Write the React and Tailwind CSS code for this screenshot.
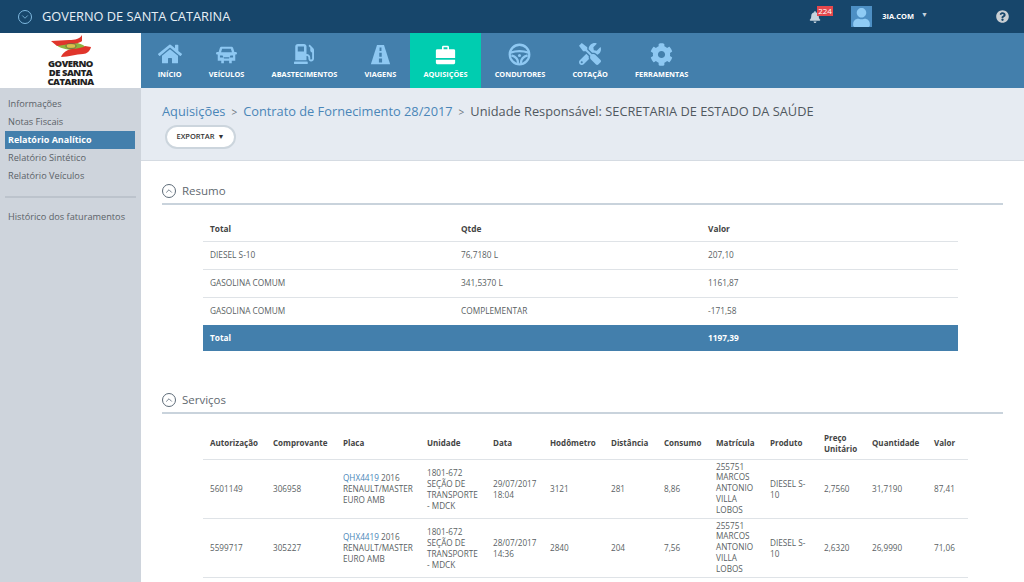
import { FaHome, FaGasPump, FaCog, FaTools, FaBell, FaQuestionCircle, FaUser } from "react-icons/fa";
import { ChevronDown, ChevronUp } from "lucide-react";

const CarIcon = ({ className }) => (
  <svg viewBox="0 0 24 24" className={className} fill="currentColor">
    <path fillRule="evenodd" d="M6.5 3h11c1 0 1.8.6 2.1 1.5L21 9h1.5c.8 0 1.5.7 1.5 1.5S23.300 12 22.500 12H22v7h-4v3h-3v-3H9v3H6v-3H2v-7h-.5C.7 12 0 11.300 0 10.500S.7 9 1.500 9H3l1.400-4.500C4.700 3.600 5.500 3 6.500 3zM7 5.500 5.800 9.500h12.400L17 5.500zM4.500 13v2.500h4L7.500 13zM19.500 13h-3l-1 2.500h4zM9 16.500h6V15H9z" />
  </svg>
);

const RoadIcon = ({ className }) => (
  <svg viewBox="0 0 24 24" className={className} fill="currentColor">
    <path d="M8 1h8l7 22H1z" />
    <path d="M10.900 4h2.200v4h-2.200zM10.600 10h2.800v4.500h-2.800zM10.200 16.500h3.600V21h-3.600z" fill="#437fac" />
  </svg>
);

const BagIcon = ({ className }) => (
  <svg viewBox="0 0 24 24" className={className} fill="currentColor">
    <path fillRule="evenodd" d="M8 6V3.500C8 2.700 8.700 2 9.500 2h5c.8 0 1.500.7 1.500 1.500V6h5.500c.8 0 1.500.7 1.500 1.500V16H1V7.500C1 6.700 1.700 6 2.500 6zM9.800 6h4.400V3.800H9.800z" />
    <path d="M1 18h22v3.500c0 .8-.7 1.500-1.500 1.500h-19C1.700 23 1 22.300 1 21.500z" />
  </svg>
);

const WheelIcon = ({ className }) => (
  <svg viewBox="0 0 24 24" className={className} fill="none" stroke="currentColor">
    <circle cx="12" cy="12" r="10.200" strokeWidth="2.400" />
    <path d="M2.500 10c6-2 13-2 19 0M10.500 21c0-4-1.500-6.500-7-8M13.500 21c0-4 1.500-6.500 7-8" strokeWidth="2.400" />
    <circle cx="12" cy="13" r="1.600" fill="currentColor" strokeWidth="0" />
  </svg>
);

const navItems = [
  { label: "Início", icon: FaHome, size: "w-[24px] h-[24px]" },
  { label: "Veículos", icon: CarIcon, size: "w-[21px] h-[21px]" },
  { label: "Abastecimentos", icon: FaGasPump, size: "w-[20px] h-[20px]" },
  { label: "Viagens", icon: RoadIcon, size: "w-[21px] h-[21px]" },
  { label: "Aquisições", icon: BagIcon, size: "w-[21px] h-[21px]", active: true },
  { label: "Condutores", icon: WheelIcon, size: "w-[23px] h-[23px]" },
  { label: "Cotação", icon: FaTools, size: "w-[22px] h-[22px]" },
  { label: "Ferramentas", icon: FaCog, size: "w-[23px] h-[23px]" },
];

const sideLinks = ["Informações", "Notas Fiscais", "Relatório Analítico", "Relatório Sintético", "Relatório Veículos"];

const resumoRows = [
  ["DIESEL S-10", "76,7180 L", "207,10", "h-[28px] border-b border-[#dfe3e7]"],
  ["GASOLINA COMUM", "341,5370 L", "1161,87", "h-[28px] border-b border-[#dfe3e7]"],
  ["GASOLINA COMUM", "COMPLEMENTAR", "-171,58", "h-[28px]"],
];

const servicoCols = [
  ["Autorização", "w-[63px]"],
  ["Comprovante", "w-[70px]"],
  ["Placa", "w-[84px]"],
  ["Unidade", "w-[66px]"],
  ["Data", "w-[57px]"],
  ["Hodômetro", "w-[61px]"],
  ["Distância", "w-[53px]"],
  ["Consumo", "w-[52px]"],
  ["Matrícula", "w-[54px]"],
  ["Produto", "w-[54px]"],
  ["Preço Unitário", "w-[48px]"],
  ["Quantidade", "w-[62px]"],
  ["Valor", "w-[41px]"],
];

const servicos = [
  { aut: "5601149", comp: "306958", data: ["29/07/2017", "18:04"], hod: "3121", dist: "281", cons: "8,86", preco: "2,7560", qtd: "31,7190", valor: "87,41" },
  { aut: "5599717", comp: "305227", data: ["28/07/2017", "14:36"], hod: "2840", dist: "204", cons: "7,56", preco: "2,6320", qtd: "26,9990", valor: "71,06" },
];

const SectionTitle = ({ title }) => (
  <div className="flex items-center gap-[6px] h-[27px] border-b-2 border-[#c9d3dc] ml-[21px] mr-[21px]">
    <span className="w-[14px] h-[14px] rounded-full border border-[#5d6b78] flex items-center justify-center">
      <ChevronUp className="w-[10px] h-[10px] text-[#5d6b78]" />
    </span>
    <span className="text-[11.5px] text-[#5f6970]">{title}</span>
  </div>
);

export default function App() {
  return (
    <div className="w-[1024px] h-[582px] overflow-hidden flex flex-col bg-white font-['Open_Sans',sans-serif] text-[#555]">
      {/* Header */}
      <header className="h-[33px] shrink-0 bg-[#17466b] flex items-center text-white">
        <span className="ml-[18px] w-[14px] h-[14px] rounded-full border border-[#7fb9e0] flex items-center justify-center">
          <ChevronDown className="w-[10px] h-[10px] text-[#7fb9e0]" />
        </span>
        <span className="ml-[10px] text-[12.8px] text-[#e8f0f6]">GOVERNO DE SANTA CATARINA</span>
        <div className="ml-auto flex items-center h-full">
          <div className="relative">
            <FaBell className="w-[12px] h-[12px] text-[#c5d3de]" />
            <span className="absolute -top-[5px] left-[8px] bg-[#e5484d] text-white text-[8px] leading-[10px] px-[1px]">224</span>
          </div>
          <span className="ml-[30px] w-[21px] h-[21px] bg-[#4d8fc4] flex items-end justify-center overflow-hidden">
            <FaUser className="w-[19px] h-[19px] text-[#8fcbf5]" />
          </span>
          <span className="ml-[10px] text-[7.5px] font-bold text-white">3IA.COM</span>
          <span className="ml-[7px] mb-[2px] text-[7px] text-[#c5d3de]">▼</span>
          <FaQuestionCircle className="ml-[68px] mr-[15px] w-[13px] h-[13px] text-[#c9cfd4]" />
        </div>
      </header>

      <div className="flex-1 flex min-h-0">
        {/* Sidebar */}
        <aside className="w-[141px] shrink-0 bg-[#ced4dc] flex flex-col">
          <div className="h-[55px] bg-white flex flex-col items-center">
            <svg viewBox="0 0 44 24" className="w-[44px] h-[24px] mt-[1px]">
              <ellipse cx="22" cy="12" rx="14" ry="4" fill="#8cb53f" transform="rotate(6 22 12)" />
              <path d="M33 1C31 5 26 6 20 6L2 7l6 5 13-2c5 0 10-1 12-3z" fill="#e0352b" />
              <path d="M42 13l-6-1c-4 3-12 2-17 4-4 2-6 4-7 7 8 0 15-3 22-3 4 0 7-3 8-7z" fill="#e0352b" />
              <ellipse cx="22" cy="12" rx="5" ry="2.400" fill="#d9c24a" stroke="#444" strokeWidth="0.600" />
            </svg>
            <div className="mt-[1px] text-[9.5px] leading-[9px] font-extrabold text-[#222] text-center tracking-[-0.5px]">
              GOVERNO
              <br />
              DE SANTA
              <br />
              CATARINA
            </div>
          </div>
          <nav className="pt-[7px] flex flex-col">
            {sideLinks.map((link) => (
              <a
                key={link}
                className={
                  link === "Relatório Analítico"
                    ? "ml-[5px] mr-[6px] h-[18px] pl-[3px] bg-[#437fac] text-white font-bold text-[9px] leading-[18px]"
                    : "ml-[5px] mr-[6px] h-[18px] pl-[3px] text-[#5b6268] text-[9.2px] leading-[18px]"
                }
              >
                {link}
              </a>
            ))}
          </nav>
          <div className="mx-[5px] mt-[11px] border-t-2 border-[#bcc3cc]" />
          <a className="mt-[10px] pl-[8px] text-[9.2px] leading-[18px] text-[#5b6268]">Histórico dos faturamentos</a>
        </aside>

        <div className="flex-1 min-w-0 flex flex-col">
          {/* Top nav */}
          <nav className="h-[55px] shrink-0 bg-[#437fac] flex pl-[3px]">
            {navItems.map(({ label, icon: Icon, size, active }) => (
              <div
                key={label}
                className={
                  active
                    ? "px-[13.6px] flex flex-col items-center bg-[#00cdb0] text-white"
                    : "px-[13.6px] flex flex-col items-center text-white"
                }
              >
                <div className={active ? "h-[24px] mt-[9px] flex items-center text-white" : "h-[24px] mt-[9px] flex items-center text-[#8ec8f2]"}>
                  <Icon className={size} />
                </div>
                <span className="mt-[2px] text-[7.35px] leading-[12px] font-bold uppercase whitespace-nowrap">{label}</span>
              </div>
            ))}
          </nav>

          {/* Breadcrumb */}
          <div className="h-[73px] shrink-0 bg-[#e6ebf2] border-b border-[#d5dbe2] pl-[21px] pt-[13px]">
            <div className="flex items-center h-[22px] text-[12.8px] whitespace-nowrap">
              <a className="text-[#4a86b8]">Aquisições</a>
              <span className="mx-[6px] text-[#6a747c] text-[10px]">&gt;</span>
              <a className="text-[#4a86b8]">Contrato de Fornecimento 28/2017</a>
              <span className="mx-[6px] text-[#6a747c] text-[10px]">&gt;</span>
              <span className="text-[#50585f]">Unidade Responsável: SECRETARIA DE ESTADO DA SAÚDE</span>
            </div>
            <button className="mt-[2px] ml-[3px] w-[71px] h-[24px] rounded-full bg-white border-2 border-[#ccd5dd] text-[7.500px] font-semibold text-[#333] flex items-center justify-center gap-[3px]">
              EXPORTAR <span className="text-[7px]">▼</span>
            </button>
          </div>

          {/* Content */}
          <main className="flex-1 min-h-0 overflow-hidden pt-[17px]">
            <SectionTitle title="Resumo" />
            <table className="mt-[10px] ml-[62px] w-[755px] table-fixed text-[8.3px] text-[#5a5f64]">
              <colgroup>
                <col className="w-[251px]" />
                <col className="w-[247px]" />
                <col />
              </colgroup>
              <thead>
                <tr className="h-[26px] border-b border-[#dfe3e7] font-bold text-[#444]">
                  <th className="pl-[7px] pt-[3px] text-left">Total</th>
                  <th className="pl-[7px] pt-[3px] text-left">Qtde</th>
                  <th className="pl-[7px] pt-[3px] text-left">Valor</th>
                </tr>
              </thead>
              <tbody>
                {resumoRows.map((row) => (
                  <tr key={row[0] + row[1]} className={row[3]}>
                    <td className="pl-[7px]">{row[0]}</td>
                    <td className="pl-[7px]">{row[1]}</td>
                    <td className="pl-[7px]">{row[2]}</td>
                  </tr>
                ))}
                <tr className="h-[26px] bg-[#437fac] text-white font-bold">
                  <td className="pl-[7px]">Total</td>
                  <td />
                  <td className="pl-[7px]">1197,39</td>
                </tr>
              </tbody>
            </table>

            <div className="mt-[36px]">
              <SectionTitle title="Serviços" />
            </div>
            <table className="mt-[13px] ml-[62px] w-[765px] table-fixed text-[8.2px] leading-[11px] text-[#5a5f64]">
              <colgroup>
                {servicoCols.map(([name, width]) => (
                  <col key={name} className={width} />
                ))}
              </colgroup>
              <thead>
                <tr className="h-[32px] border-b border-[#dfe3e7] text-[#444]">
                  {servicoCols.map(([name]) => (
                    <th key={name} className="pl-[7px] text-left font-bold text-[8px] whitespace-normal">{name}</th>
                  ))}
                </tr>
              </thead>
              <tbody>
                {servicos.map((s) => (
                  <tr key={s.aut} className="h-[59px] border-b border-[#dfe3e7]">
                    <td className="pl-[7px]">{s.aut}</td>
                    <td className="pl-[7px]">{s.comp}</td>
                    <td className="pl-[7px]">
                      <a className="text-[#4a86b8]">QHX4419</a> 2016<br />RENAULT/MASTER<br />EURO AMB
                    </td>
                    <td className="pl-[7px]">1801-672<br />SEÇÃO DE<br />TRANSPORTE<br />- MDCK</td>
                    <td className="pl-[7px]">{s.data[0]}<br />{s.data[1]}</td>
                    <td className="pl-[7px]">{s.hod}</td>
                    <td className="pl-[7px]">{s.dist}</td>
                    <td className="pl-[7px]">{s.cons}</td>
                    <td className="pl-[7px] leading-[10.700px]">255751<br />MARCOS<br />ANTONIO<br />VILLA<br />LOBOS</td>
                    <td className="pl-[7px]">DIESEL S-<br />10</td>
                    <td className="pl-[7px]">{s.preco}</td>
                    <td className="pl-[7px]">{s.qtd}</td>
                    <td className="pl-[7px]">{s.valor}</td>
                  </tr>
                ))}
              </tbody>
            </table>
          </main>
        </div>
      </div>
    </div>
  );
}
